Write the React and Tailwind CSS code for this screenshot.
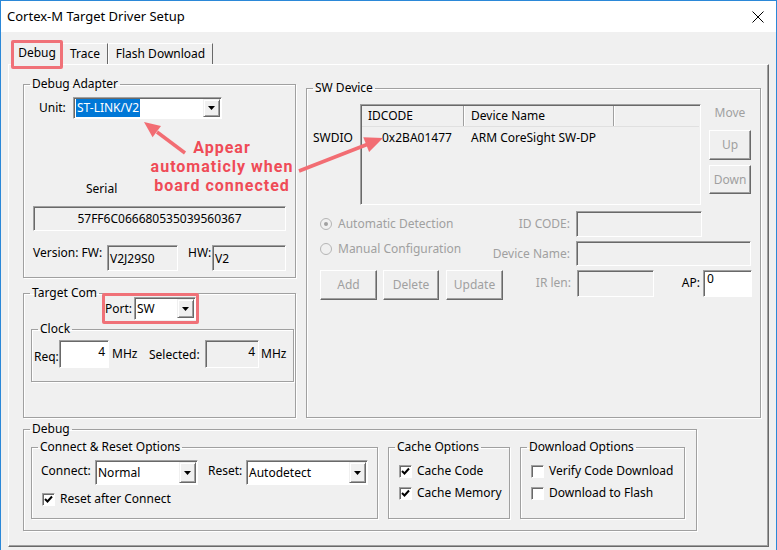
import React from 'react';

const sunken = 'border border-t-[#a0a0a0] border-l-[#a0a0a0] border-r-white border-b-white shadow-[inset_1px_1px_0_#696969]';
const raised = 'border border-t-white border-l-white border-r-[#696969] border-b-[#696969] shadow-[inset_-1px_-1px_0_#a0a0a0]';

const Group = ({ label, className = '', children }) => (
  <fieldset className={`border border-[#a0a0a0] shadow-[inset_1px_1px_0_#fff,1px_1px_0_#fff] ${className}`}>
    <legend className="ml-[6px] px-[2px] leading-[16px]">{label}</legend>
    {children}
  </fieldset>
);

const Combo = ({ className = '', children }) => (
  <div className={`flex bg-white p-[1px] ${sunken} ${className}`}>
    <div className="flex-1 flex items-center pl-[1px] overflow-hidden whitespace-nowrap">{children}</div>
    <div className="w-[17px] h-full bg-[#f0f0f0] border border-t-[#f0f0f0] border-l-[#f0f0f0] border-r-[#696969] border-b-[#696969] shadow-[inset_1px_1px_0_#fff,inset_-1px_-1px_0_#a0a0a0] flex items-center justify-center">
      <svg width="7" height="4" viewBox="0 0 7 4">
        <path d="M0 0h7L3.5 4z" fill="#000" />
      </svg>
    </div>
  </div>
);

const Box = ({ className = '', children }) => (
  <div className={`bg-[#f0f0f0] ${sunken} ${className}`}>{children}</div>
);

const Button = ({ className = '', children }) => (
  <div className={`flex items-center justify-center text-[#a0a0a0] bg-[#f0f0f0] ${raised} ${className}`}>{children}</div>
);

const Check = ({ checked }) => (
  <span className={`w-[13px] h-[13px] bg-white flex items-center justify-center ${sunken}`}>
    {checked && (
      <svg width="9" height="9" viewBox="0 0 9 9">
        <path d="M1 4l2.5 2.5L8 1.5" fill="none" stroke="#000" strokeWidth="2" />
      </svg>
    )}
  </span>
);

const Radio = ({ on }) => (
  <span className="w-[12px] h-[12px] rounded-full border border-[#b5b5b5] bg-[#f0f0f0] flex items-center justify-center">
    {on && <span className="w-[4px] h-[4px] rounded-full bg-[#a0a0a0]" />}
  </span>
);

export default function App() {
  return (
    <div className="relative w-[777px] h-[550px] overflow-hidden bg-[#f0f0f0] border-x border-t border-[#2b88d8] font-['Noto_Sans',sans-serif] text-[12px] text-black">
      {/* title bar */}
      <div className="h-[31px] bg-white flex items-center justify-between pl-[6px] pr-[12px]">
        <span className="text-[13px]">Cortex-M Target Driver Setup</span>
        <svg width="12" height="12" viewBox="0 0 12 12">
          <path d="M0.5 0.5l11 11M11.5 0.5l-11 11" stroke="#000" strokeWidth="1" />
        </svg>
      </div>

      <div className="pl-[7px] pt-[9px]">
        {/* tabs */}
        <div className="flex items-end h-[23px] pl-[4px]">
          <div className="relative z-10 w-[50px] h-[25px] -mb-[2px] bg-[#f0f0f0] border-t border-l border-white border-r border-r-[#696969] flex items-start justify-center pt-[2px]">
            Debug
            <span className="absolute left-[-2px] top-[-2px] w-[52px] h-[29px] border-[3px] border-[#f07178] rounded-[2px]" />
          </div>
          <div className="w-[46px] h-[21px] border-t border-l border-white border-r border-r-[#696969] flex items-center justify-center">Trace</div>
          <div className="w-[105px] h-[21px] border-t border-l border-white border-r border-r-[#696969] flex items-center justify-center">Flash Download</div>
        </div>

        {/* panel */}
        <div className="w-[761px] h-[483px] border border-t-white border-l-white border-r-[#696969] border-b-[#696969] shadow-[inset_-1px_-1px_0_#a0a0a0] pl-[14px] pt-[11px]">
          <div className="flex items-start gap-[10px]">
            {/* left column */}
            <div className="w-[273px] flex flex-col">
              <Group label="Debug Adapter" className="h-[202px]">
                <div className="flex items-center mt-[5px] pl-[15px]">
                  <span className="w-[34px]">Unit:</span>
                  <Combo className="w-[149px] h-[22px]">
                    <span className="bg-[#0078d7] text-white px-[1px] leading-[18px]">ST-LINK/V2</span>
                  </Combo>
                </div>
                <div className="mt-[62px] ml-[62px] leading-[16px]">Serial</div>
                <Box className="mt-[9px] ml-[9px] w-[253px] h-[25px] flex items-center justify-center">57FF6C066680535039560367</Box>
                <div className="flex items-start mt-[14px] ml-[9px]">
                  <span className="w-[74px] leading-[16px]">Version: FW:</span>
                  <Box className="w-[71px] h-[26px] flex items-center pl-[2px] pt-[2px]">V2J29S0</Box>
                  <span className="ml-[10px] w-[24px] leading-[16px]">HW:</span>
                  <Box className="w-[74px] h-[26px] flex items-center pl-[2px] pt-[2px]">V2</Box>
                </div>
              </Group>

              <Group label="Target Com" className="mt-[7px] h-[133px]">
                <div className="relative flex items-center -mt-[4px] ml-[81px] w-[91px]">
                  <span className="w-[29px]">Port:</span>
                  <Combo className="w-[62px] h-[23px]">SW</Combo>
                  <span className="absolute left-[-3px] top-[-4px] w-[97px] h-[31px] border-[3px] border-[#f07178] rounded-[2px]" />
                </div>
                <Group label="Clock" className="mt-[1px] ml-[7px] w-[263px] h-[61px]">
                  <div className="flex items-center mt-[3px] pl-[2px]">
                    <span className="w-[25px] mt-[5px]">Req:</span>
                    <div className={`w-[50px] h-[28px] bg-white ${sunken} text-right pr-[3px] pt-[3px] leading-[16px]`}>4</div>
                    <span className="ml-[3px] w-[37px]">MHz</span>
                    <span className="w-[56px] mt-[2px]">Selected:</span>
                    <Box className="w-[54px] h-[28px] text-right pr-[3px] pt-[3px] leading-[16px]">4</Box>
                    <span className="ml-[2px]">MHz</span>
                  </div>
                </Group>
              </Group>
            </div>

            {/* SW Device */}
            <Group label="SW Device" className="mt-[4px] w-[455px] h-[338px]">
              <div className="flex items-start mt-[8px]">
                <span className="ml-[6px] w-[47px] mt-[26px] leading-[16px]">SWDIO</span>
                <div className={`w-[341px] h-[101px] bg-[#f0f0f0] ${sunken} p-[1px]`}>
                  <div className="flex h-[21px] border-b border-[#e0e0e0]">
                    <div className="w-[102px] border-r border-[#a0a0a0] shadow-[1px_0_0_#fff] flex items-center pl-[6px]">IDCODE</div>
                    <div className="w-[150px] border-r border-[#a0a0a0] shadow-[1px_0_0_#fff] flex items-center pl-[7px]">Device Name</div>
                    <div className="flex-1" />
                  </div>
                  <div className="flex leading-[16px] mt-[3px]">
                    <span className="w-[102px] pl-[20px]">0x2BA01477</span>
                    <span className="pl-[7px]">ARM CoreSight SW-DP</span>
                  </div>
                </div>
                <div className="ml-[8px] w-[42px] flex flex-col">
                  <span className="mt-[1px] text-center leading-[16px] text-[#a0a0a0]">Move</span>
                  <Button className="mt-[9px] h-[30px]">Up</Button>
                  <Button className="mt-[5px] h-[29px]">Down</Button>
                </div>
              </div>

              <div className="flex items-center mt-[6px] pl-[13px] text-[#a0a0a0]">
                <div className="w-[180px] flex items-center gap-[6px] leading-[16px]"><Radio on />Automatic Detection</div>
                <span className="w-[70px] text-right">ID CODE:</span>
                <Box className="ml-[6px] w-[126px] h-[26px]" />
              </div>
              <div className="flex items-start mt-[4px] pl-[13px] text-[#a0a0a0]">
                <div className="w-[169px] flex items-center gap-[6px] leading-[16px]"><Radio />Manual Configuration</div>
                <span className="w-[81px] text-right mt-[5px] leading-[16px]">Device Name:</span>
                <Box className="ml-[6px] w-[175px] h-[25px]" />
              </div>
              <div className="flex items-start mt-[4px] pl-[13px] text-[#a0a0a0]">
                <Button className="w-[57px] h-[30px]">Add</Button>
                <Button className="ml-[6px] w-[56px] h-[30px]">Delete</Button>
                <Button className="ml-[7px] w-[57px] h-[30px]">Update</Button>
                <span className="w-[68px] text-right mt-[5px] leading-[16px]">IR len:</span>
                <Box className="ml-[6px] w-[77px] h-[27px]" />
                <span className="w-[46px] text-right mt-[5px] leading-[16px] text-black">AP:</span>
                <div className={`ml-[3px] w-[49px] h-[27px] bg-white ${sunken} pl-[3px] leading-[16px] text-black`}>0</div>
              </div>
            </Group>
          </div>

          {/* bottom Debug */}
          <Group label="Debug" className="mt-[3px] w-[674px] h-[110px]">
            <div className="flex items-start mt-[2px] pl-[7px]">
              <Group label="Connect &amp; Reset Options" className="w-[347px] h-[80px]">
                <div className="flex items-center mt-[5px] pl-[9px]">
                  <span className="w-[54px] -mt-[3px]">Connect:</span>
                  <Combo className="w-[103px] h-[25px]">Normal</Combo>
                  <span className="ml-[10px] w-[38px] -mt-[3px]">Reset:</span>
                  <Combo className="w-[122px] h-[25px]">Autodetect</Combo>
                </div>
                <div className="flex items-center mt-[6px] pl-[10px] gap-[5px] leading-[16px]">
                  <Check checked />Reset after Connect
                </div>
              </Group>
              <Group label="Cache Options" className="ml-[10px] w-[122px] h-[80px]">
                <div className="flex items-center mt-[8px] pl-[10px] gap-[5px] leading-[16px]"><Check checked />Cache Code</div>
                <div className="flex items-center mt-[6px] pl-[10px] gap-[5px] leading-[16px]"><Check checked />Cache Memory</div>
              </Group>
              <Group label="Download Options" className="ml-[10px] w-[165px] h-[80px]">
                <div className="flex items-center mt-[8px] pl-[10px] gap-[5px] leading-[16px] whitespace-nowrap"><Check />Verify Code Download</div>
                <div className="flex items-center mt-[6px] pl-[10px] gap-[5px] leading-[16px]"><Check />Download to Flash</div>
              </Group>
            </div>
          </Group>
        </div>
      </div>

      {/* annotation */}
      <div className="absolute left-[140px] top-[137px] w-[162px] text-center leading-[19px] font-bold text-[16px] tracking-[1px] font-['Roboto',sans-serif] text-[#ef4b57] pointer-events-none">
        Appear<br />automaticly when<br />board connected
      </div>
      <svg className="absolute left-0 top-0 pointer-events-none" width="777" height="550">
        <line x1="184" y1="152" x2="156" y2="131" stroke="#f26d73" strokeWidth="3.5" />
        <polygon points="143,121 160,125 151.6,136.2" fill="#f26d73" />
        <line x1="298" y1="170" x2="366" y2="143.5" stroke="#f26d73" strokeWidth="3.5" />
        <polygon points="382,137 368.1,151 362.3,136.2" fill="#f26d73" />
      </svg>
    </div>
  );
}
